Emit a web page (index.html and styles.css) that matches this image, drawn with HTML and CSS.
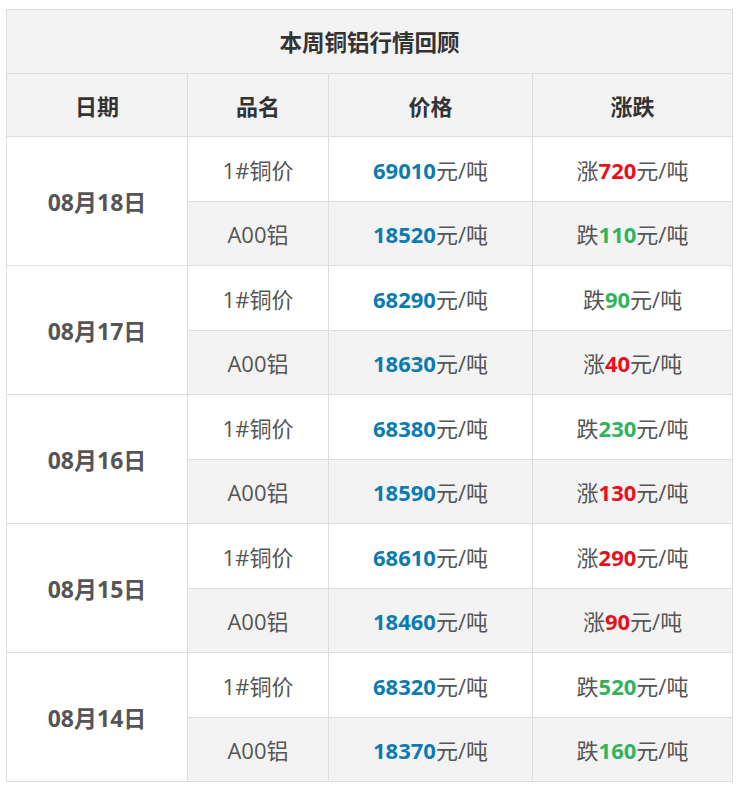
FILE: index.html
```html
<!DOCTYPE html>
<html lang="zh">
<head>
<meta charset="utf-8">
<title>本周铜铝行情回顾</title>
<link rel="stylesheet" href="styles.css">
</head>
<body>
<table class="price-table">
  <colgroup>
    <col class="c-date"><col class="c-name"><col class="c-price"><col class="c-change">
  </colgroup>
  <thead>
    <tr class="title-row"><th colspan="4">本周铜铝行情回顾</th></tr>
    <tr class="head-row"><th>日期</th><th>品名</th><th>价格</th><th>涨跌</th></tr>
  </thead>
  <tbody>
    <tr><td rowspan="2" class="date">08月18日</td><td>1#铜价</td><td><b class="price">69010</b>元/吨</td><td>涨<b class="up">720</b>元/吨</td></tr>
    <tr class="alt"><td>A00铝</td><td><b class="price">18520</b>元/吨</td><td>跌<b class="down">110</b>元/吨</td></tr>
    <tr><td rowspan="2" class="date">08月17日</td><td>1#铜价</td><td><b class="price">68290</b>元/吨</td><td>跌<b class="down">90</b>元/吨</td></tr>
    <tr class="alt"><td>A00铝</td><td><b class="price">18630</b>元/吨</td><td>涨<b class="up">40</b>元/吨</td></tr>
    <tr><td rowspan="2" class="date">08月16日</td><td>1#铜价</td><td><b class="price">68380</b>元/吨</td><td>跌<b class="down">230</b>元/吨</td></tr>
    <tr class="alt"><td>A00铝</td><td><b class="price">18590</b>元/吨</td><td>涨<b class="up">130</b>元/吨</td></tr>
    <tr><td rowspan="2" class="date">08月15日</td><td>1#铜价</td><td><b class="price">68610</b>元/吨</td><td>涨<b class="up">290</b>元/吨</td></tr>
    <tr class="alt"><td>A00铝</td><td><b class="price">18460</b>元/吨</td><td>涨<b class="up">90</b>元/吨</td></tr>
    <tr><td rowspan="2" class="date">08月14日</td><td>1#铜价</td><td><b class="price">68320</b>元/吨</td><td>跌<b class="down">520</b>元/吨</td></tr>
    <tr class="alt"><td>A00铝</td><td><b class="price">18370</b>元/吨</td><td>跌<b class="down">160</b>元/吨</td></tr>
  </tbody>
</table>
</body>
</html>
```
FILE: styles.css
```css
body {
  margin: 0;
  background: #fff;
  font-family: "Open Sans", "Noto Sans CJK SC", sans-serif;
}
.price-table {
  margin: 9px 0 0 6px;
  width: 727px;
  table-layout: fixed;
  border-collapse: collapse;
  font-size: 22px;
  color: #555;
}
.c-date { width: 181px; }
.c-name { width: 141px; }
.c-price { width: 204px; }
.c-change { width: 200px; }
.price-table th,
.price-table td {
  border: 1px solid #ddd;
  padding: 0;
  text-align: center;
  vertical-align: middle;
  white-space: nowrap;
}
.price-table th {
  background: #f3f3f3;
  color: #333;
  font-weight: 700;
  height: 62px;
}
.title-row th { height: 63px; font-size: 22.5px; }
.price-table td { height: 63.5px; background: #fff; }
.price-table tr.alt td { background: #f3f3f3; }
.price-table td.date { background: #fff; font-weight: 700; font-size: 23px; }
.price { color: #0c7bb0; font-weight: 700; }
.up { color: #e8101c; font-weight: 700; }
.down { color: #2fb45c; font-weight: 700; }
```
